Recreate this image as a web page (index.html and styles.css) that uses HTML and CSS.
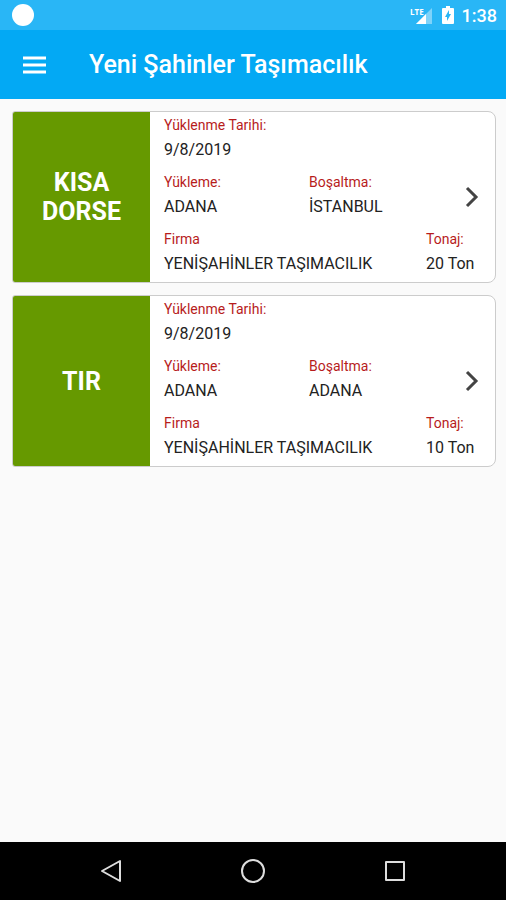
FILE: index.html
```html
<!DOCTYPE html>
<html lang="tr">
<head>
<meta charset="utf-8">
<meta name="viewport" content="width=device-width, initial-scale=1">
<title>Yeni Şahinler Taşımacılık</title>
<link rel="stylesheet" href="styles.css">
</head>
<body>
<div class="status-bar">
  <span class="status-dot"></span>
  <div class="status-icons">
    <svg class="signal" viewBox="0 0 24 20" aria-hidden="true">
      <path class="faint" d="M22 3V19H6Z"/>
      <path class="cutout" d="M0 0H14V11H0Z"/>
      <path class="solid" d="M16 9V19H6Z"/>
      <text class="lte" x="0" y="10">LTE</text>
    </svg>
    <svg class="battery" viewBox="0 0 12 18" aria-hidden="true">
      <path class="solid" d="M4 0H8V2H11Q12 2 12 3V17Q12 18 11 18H1Q0 18 0 17V3Q0 2 1 2H4Z"/>
      <path class="bolt" d="M7 4L3 11H5V15L9 8H7Z"/>
    </svg>
    <span class="clock">1:38</span>
  </div>
</div>
<header class="app-bar">
  <button class="menu-button" type="button" aria-label="Menü">
    <svg viewBox="0 0 24 18" aria-hidden="true"><path d="M0 2H23M0 9H23M0 16H23"/></svg>
  </button>
  <h1>Yeni Şahinler Taşımacılık</h1>
</header>
<main class="loads">
  <a class="card" href="#kisa-dorse">
    <span class="vehicle">KISA DORSE</span>
    <dl class="details">
      <div class="field wide"><dt>Yüklenme Tarihi:</dt><dd>9/8/2019</dd></div>
      <div class="field from"><dt>Yükleme:</dt><dd>ADANA</dd></div>
      <div class="field"><dt>Boşaltma:</dt><dd>İSTANBUL</dd></div>
      <div class="field wide"><dt>Firma</dt><dd>YENİŞAHİNLER TAŞIMACILIK</dd></div>
      <div class="field tonnage"><dt>Tonaj:</dt><dd>20 Ton</dd></div>
    </dl>
    <svg class="chevron" viewBox="0 0 14 22" aria-hidden="true"><path d="M2 2L11 11L2 20"/></svg>
  </a>
  <a class="card" href="#tir">
    <span class="vehicle">TIR</span>
    <dl class="details">
      <div class="field wide"><dt>Yüklenme Tarihi:</dt><dd>9/8/2019</dd></div>
      <div class="field from"><dt>Yükleme:</dt><dd>ADANA</dd></div>
      <div class="field"><dt>Boşaltma:</dt><dd>ADANA</dd></div>
      <div class="field wide"><dt>Firma</dt><dd>YENİŞAHİNLER TAŞIMACILIK</dd></div>
      <div class="field tonnage"><dt>Tonaj:</dt><dd>10 Ton</dd></div>
    </dl>
    <svg class="chevron" viewBox="0 0 14 22" aria-hidden="true"><path d="M2 2L11 11L2 20"/></svg>
  </a>
</main>
<nav class="nav-bar">
  <button type="button" aria-label="Geri"><svg viewBox="0 0 24 24" aria-hidden="true"><path d="M21 2V22L3 12Z"/></svg></button>
  <button type="button" aria-label="Ana ekran"><svg viewBox="0 0 24 24" aria-hidden="true"><circle cx="12" cy="12" r="11"/></svg></button>
  <button type="button" aria-label="Son uygulamalar"><svg viewBox="0 0 24 24" aria-hidden="true"><path d="M3 3H21V21H3Z"/></svg></button>
</nav>
</body>
</html>
```
FILE: styles.css
```css
* {
  box-sizing: border-box;
}

body {
  margin: 0;
  min-height: 100vh;
  display: flex;
  flex-direction: column;
  background: #fafafa;
  color: #222;
  font-family: Roboto, "Liberation Sans", sans-serif;
}

button {
  border: 0;
  padding: 0;
  background: none;
}

svg {
  display: block;
}

.status-bar {
  height: 30px;
  padding: 0 9px 0 12px;
  display: flex;
  align-items: center;
  justify-content: space-between;
  background: #29b6f6;
  color: #fff;
}

.status-dot {
  width: 22px;
  height: 22px;
  border-radius: 50%;
  background: #fff;
}

.status-icons {
  display: flex;
  align-items: center;
  gap: 8px;
}

.signal {
  width: 24px;
  height: 20px;
}

.battery {
  width: 12px;
  height: 18px;
}

.solid {
  fill: #fff;
}

.faint {
  fill: #7fd3fa;
}

.cutout {
  fill: #29b6f6;
}

.bolt {
  fill: #29b6f6;
}

.lte {
  fill: #fff;
  font-family: "Open Sans", sans-serif;
  font-size: 8px;
  font-weight: 700;
}

.clock {
  font-size: 18px;
  font-weight: 500;
}

.app-bar {
  height: 69px;
  padding: 0 23px;
  display: flex;
  align-items: center;
  gap: 42px;
  background: #03a9f4;
  color: #fff;
}

.menu-button svg {
  width: 24px;
  height: 18px;
  fill: none;
  stroke: #fff;
  stroke-width: 3;
}

.app-bar h1 {
  margin: 0;
  font-size: 25px;
  font-weight: 500;
}

.loads {
  flex: 1;
  padding: 12px 10px 12px 12px;
  display: flex;
  flex-direction: column;
  gap: 12px;
}

.card {
  position: relative;
  display: flex;
  overflow: hidden;
  border: 1px solid #ccc;
  border-radius: 3px 8px 8px 3px;
  background: #fff;
  color: inherit;
  text-decoration: none;
}

.vehicle {
  flex: 0 0 137px;
  padding: 0 24px;
  display: flex;
  align-items: center;
  justify-content: center;
  background: #690;
  color: #fff;
  font-size: 25px;
  font-weight: 700;
  line-height: 29px;
  text-align: center;
}

.details {
  flex: 1;
  margin: 0;
  padding: 1px 0 6px 14px;
  display: grid;
  grid-template-columns: 145fr 117fr 69fr;
  row-gap: 8px;
}

.field.wide {
  grid-column: 1 / 3;
}

.field.from {
  grid-column: 1;
}

.field.tonnage {
  grid-column: 3;
}

dt {
  color: #b71c1c;
  font-size: 14px;
  line-height: 25px;
}

dd {
  margin: 0;
  font-size: 16px;
  line-height: 24px;
}

.chevron {
  position: absolute;
  top: 50%;
  right: 16px;
  width: 14px;
  height: 22px;
  margin-top: -11px;
  fill: none;
  stroke: #444;
  stroke-width: 3;
}

.nav-bar {
  height: 58px;
  padding: 0 40px;
  display: flex;
  align-items: center;
  background: #000;
}

.nav-bar button {
  flex: 1;
  display: flex;
  justify-content: center;
}

.nav-bar svg {
  width: 24px;
  height: 24px;
  fill: none;
  stroke: #ddd;
  stroke-width: 2;
  stroke-linejoin: round;
}
```
